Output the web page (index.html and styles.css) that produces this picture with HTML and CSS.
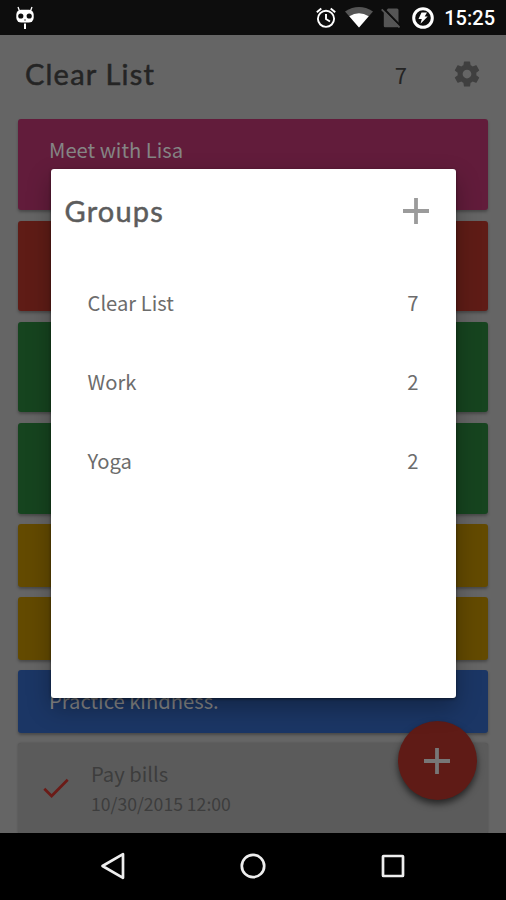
FILE: index.html
```html
<!DOCTYPE html>
<html lang="en">
<head>
<meta charset="utf-8">
<title>Clear List</title>
<link rel="stylesheet" href="styles.css">
</head>
<body>
<div class="phone">
  <div class="status">
    <svg class="cid" width="20" height="24" viewBox="0 0 20 24">
      <path d="M3 1l1.500 4M17 1l-1.500 4" stroke="#fff" stroke-width="1.300"/>
      <rect x="1.300" y="3.800" width="17.400" height="12.800" rx="5" fill="#fff"/>
      <circle cx="5.800" cy="10" r="2.600" fill="#0d0d0d"/><circle cx="14.200" cy="10" r="2.600" fill="#0d0d0d"/>
      <path d="M9 14h2" stroke="#555"/><path d="M10 17.500V23" stroke="#fff" stroke-width="2"/>
    </svg>
    <svg class="alarm" width="20" height="22" viewBox="0 0 20 22" fill="none" stroke="#fff" stroke-width="1.900">
      <circle cx="10" cy="11.800" r="8.100"/><path d="M10 7v5l4 2.500M.8 5.200l4.500-3.800M19.200 5.200l-4.500-3.800"/>
    </svg>
    <svg class="wifi" width="28" height="21" viewBox="0 0 28 21">
      <path d="M0 4.500Q14-4.300 28 4.500L14 20.500z" fill="#555"/><path d="M4.300 9.300Q14 3.200 23.700 9.300L14 20.500z" fill="#fff"/>
    </svg>
    <svg class="sim" width="20" height="20" viewBox="0 0 20 20">
      <path d="M7 .5h9a1.500 1.500 0 0 1 1.500 1.500v16a1.200 1.200 0 0 1-1.200 1.200H4A1.200 1.200 0 0 1 2.800 18V5z" fill="#555"/>
      <path d="M2 0l18 18.500" stroke="#0d0d0d" stroke-width="2.200"/><path d="M.7 1.300L18.500 19.500" stroke="#555" stroke-width="1.800"/>
    </svg>
    <svg class="power" width="22" height="22" viewBox="0 0 22 22">
      <circle cx="11" cy="11" r="9.300" fill="none" stroke="#fff" stroke-width="3"/><path d="M9.500 5.500H15l-2.300 4h3L8.500 16.800l1.300-4.800H6.500z" fill="#fff"/>
    </svg>
    <span class="time">15:25</span>
  </div>
  <div class="app">
    <header class="bar">
      <h1>Clear List</h1>
      <span class="total">7</span>
      <svg class="gear" width="30" height="30" viewBox="0 0 24 24"><path fill="#3f3f3f" d="M19.430 12.980c.04-.32.07-.64.07-.98s-.03-.66-.07-.98l2.110-1.650c.19-.15.24-.42.12-.64l-2-3.460c-.12-.22-.39-.3-.61-.22l-2.490 1c-.52-.4-1.080-.73-1.690-.98l-.38-2.650C14.460 2.180 14.250 2 14 2h-4c-.25 0-.46.18-.49.42l-.38 2.650c-.61.25-1.170.59-1.690.98l-2.490-1c-.23-.09-.49 0-.61.22l-2 3.460c-.13.22-.07.49.12.64l2.110 1.650c-.04.32-.07.65-.07.98s.03.66.07.98l-2.110 1.650c-.19.15-.24.42-.12.64l2 3.460c.12.22.39.3.61.22l2.490-1c.52.4 1.080.73 1.690.98l.38 2.650c.03.24.24.42.49.42h4c.25 0 .46-.18.49-.42l.38-2.650c.61-.25 1.170-.59 1.690-.98l2.490 1c.23.09.49 0 .61-.22l2-3.460c.12-.22.07-.49-.12-.64l-2.110-1.650zM12 15.500c-1.930 0-3.500-1.570-3.500-3.500s1.570-3.500 3.500-3.500 3.500 1.570 3.500 3.500-1.570 3.500-3.500 3.500z"/></svg>
    </header>
    <main class="list">
      <div class="card tall pink">Meet with Lisa</div>
      <div class="card tall red"></div>
      <div class="card tall green"></div>
      <div class="card tall green"></div>
      <div class="card yellow"></div>
      <div class="card yellow"></div>
      <div class="card blue">Practice kindness.</div>
      <div class="card tall done">
        <svg class="check" width="26" height="20" viewBox="0 0 26 20"><path d="M1.300 10.800l7.300 7.200L24.700 1.700" fill="none" stroke="#6b1b17" stroke-width="2.700"/></svg>
        <div class="what"><div class="name">Pay bills</div><div class="date">10/30/2015 12:00</div></div>
      </div>
    </main>
  </div>
  <nav class="nav">
    <svg width="26" height="28" viewBox="0 0 26 28"><path d="M23 2.200v23.600L2.500 14z"/></svg>
    <svg width="26" height="28" viewBox="0 0 26 28"><circle cx="13" cy="14" r="11.200"/></svg>
    <svg width="26" height="28" viewBox="0 0 26 28"><rect x="3" y="4" width="20" height="20" rx=".5"/></svg>
  </nav>
  <div class="fab"><svg width="26" height="26" viewBox="0 0 26 26"><path d="M13 0v26M0 13h26" stroke="#777" stroke-width="3.800"/></svg></div>
  <section class="dialog">
    <div class="head"><h2>Groups</h2><svg width="26" height="26" viewBox="0 0 26 26"><path d="M13 0v26M0 13h26" stroke="#9b9b9b" stroke-width="3.800"/></svg></div>
    <div class="row"><span>Clear List</span><span>7</span></div>
    <div class="row"><span>Work</span><span>2</span></div>
    <div class="row"><span>Yoga</span><span>2</span></div>
  </section>
</div>
</body>
</html>
```
FILE: styles.css
```css
* { box-sizing: border-box; }
body { margin: 0; background: #000; font-family: "Noto Sans CJK SC", sans-serif; }
svg { display: block; flex: none; }
h1, h2 { margin: 0; font: 400 29px/40px Lato, sans-serif; letter-spacing: 1.200px; -webkit-text-stroke: 0.500px currentColor; }
.phone { position: relative; width: 506px; height: 900px; overflow: hidden; display: flex; flex-direction: column; }
.status { height: 35px; flex: none; background: #0d0d0d; display: flex; align-items: center; padding: 0 11px 0 15px; color: #fff; }
.cid { margin-top: 1px; }
.alarm { margin-left: auto; }
.wifi { margin-left: 9px; }
.sim { margin-left: 8px; }
.power { margin-left: 11px; }
.time { margin-left: 10px; font: 500 20px/35px Roboto, sans-serif; padding-top: 2px; }
.app { height: 798px; flex: none; background: #656565; overflow: hidden; }
.bar { height: 84.300px; display: flex; align-items: center; padding: 0 24px 6px 25px; color: #242424; }
.total { margin-left: auto; margin-right: 45px; font-size: 22px; line-height: 32px; }
.list { display: flex; flex-direction: column; gap: 10.700px; padding: 0 18px; }
.card { height: 62.300px; flex: none; border-radius: 3px; padding: 15px 31px; font-size: 20.200px; line-height: 32px; color: #858585; box-shadow: 0 2px 3px rgba(0,0,0,.28); }
.tall { height: 90.600px; }
.pink { background: #621c3b; }
.red { background: #5f1c16; }
.green { background: #16441f; }
.yellow { background: #634a00; }
.blue { background: #1b3665; }
.done { background: #5b5b5b; display: flex; padding: 15px 25px; color: #3d3d3d; box-shadow: 0 0 2px rgba(0,0,0,.25); }
.check { margin-top: 20px; }
.what { margin-left: 22px; }
.date { font-size: 17.600px; line-height: 28px; }
.nav { flex: 1; background: #000; display: flex; justify-content: space-between; align-items: center; padding: 0 100px 1px; }
.nav svg { fill: none; stroke: #eee; stroke-width: 2.700; stroke-linejoin: round; }
.fab { position: absolute; left: 397.500px; top: 721px; width: 79px; height: 79px; border-radius: 50%; background: #5f1b16; display: grid; place-items: center; box-shadow: 0 4px 7px rgba(0,0,0,.6); }
.dialog { position: absolute; left: 50.500px; top: 169px; width: 405px; height: 529px; background: #fff; border-radius: 3px; color: #6c6c6c; box-shadow: 0 10px 24px rgba(0,0,0,.3), 0 1px 3px rgba(0,0,0,.5); }
.head { height: 94px; display: flex; justify-content: space-between; align-items: center; padding: 0 26.500px 11px 14px; }
.head h2 { color: #5c5c5c; }
.row { height: 79px; display: flex; justify-content: space-between; align-items: center; padding: 0 37px; font-size: 20.200px; line-height: 32px; }
```
